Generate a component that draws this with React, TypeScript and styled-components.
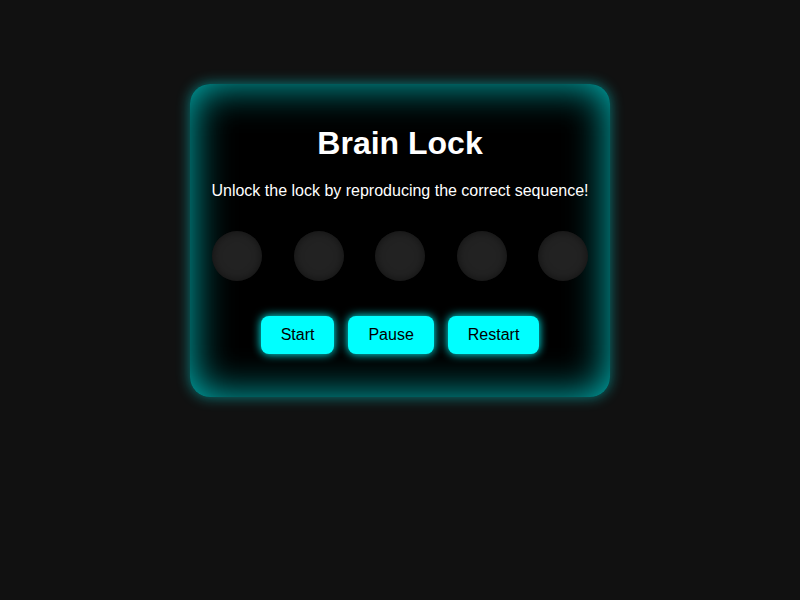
import * as React from 'react'
import styled, { createGlobalStyle } from 'styled-components'

const Global = createGlobalStyle`
  html, body {
    margin: 0;
    padding: 0;
    background: #111;
    font-family: "Liberation Sans", Arial, sans-serif;
  }
`

const Page = styled.div`
  height: 600px;
  display: flex;
  justify-content: center;
  align-items: flex-start;
  padding-top: 84px;
  box-sizing: border-box;
`

const Card = styled.div`
  width: 420px;
  box-sizing: border-box;
  padding: 22px 20px 43px;
  background: #000;
  border-radius: 20px;
  box-shadow: 0 0 14px rgba(0, 255, 255, 0.45), inset 0 0 40px rgba(0, 255, 255, 0.75);
  color: #fff;
  text-align: center;
`

const Title = styled.h1`
  margin: 19px 0 0;
  font-size: 32px;
  line-height: 37px;
  font-weight: bold;
`

const Subtitle = styled.p`
  margin: 20px 0 0;
  font-size: 16px;
  line-height: 18px;
  white-space: nowrap;
`

const Lights = styled.div`
  display: flex;
  justify-content: space-between;
  margin: 31px 2px 0;
`

const Light = styled.div<{ $on?: boolean }>`
  width: 50px;
  height: 50px;
  border-radius: 50%;
  background: ${p => (p.$on ? '#0ff' : '#222')};
  box-shadow: inset 0 0 8px rgba(0, 0, 0, 0.5);
`

const Controls = styled.div`
  display: flex;
  justify-content: center;
  gap: 14px;
  margin-top: 35px;
`

const Button = styled.button`
  font-family: "Liberation Sans", Arial, sans-serif;
  font-size: 16px;
  line-height: 18px;
  padding: 10px 20px;
  border: none;
  border-radius: 8px;
  background: #0ff;
  color: #000;
  box-shadow: 0 0 10px #0ff;
  cursor: pointer;
`

export default function App() {
  const lights = [0, 1, 2, 3, 4]
  return (
    <>
      <Global />
      <Page>
        <Card>
          <Title>Brain Lock</Title>
          <Subtitle>Unlock the lock by reproducing the correct sequence!</Subtitle>
          <Lights>
            {lights.map(i => <Light key={i} />)}
          </Lights>
          <Controls>
            <Button>Start</Button>
            <Button>Pause</Button>
            <Button>Restart</Button>
          </Controls>
        </Card>
      </Page>
    </>
  )
}
